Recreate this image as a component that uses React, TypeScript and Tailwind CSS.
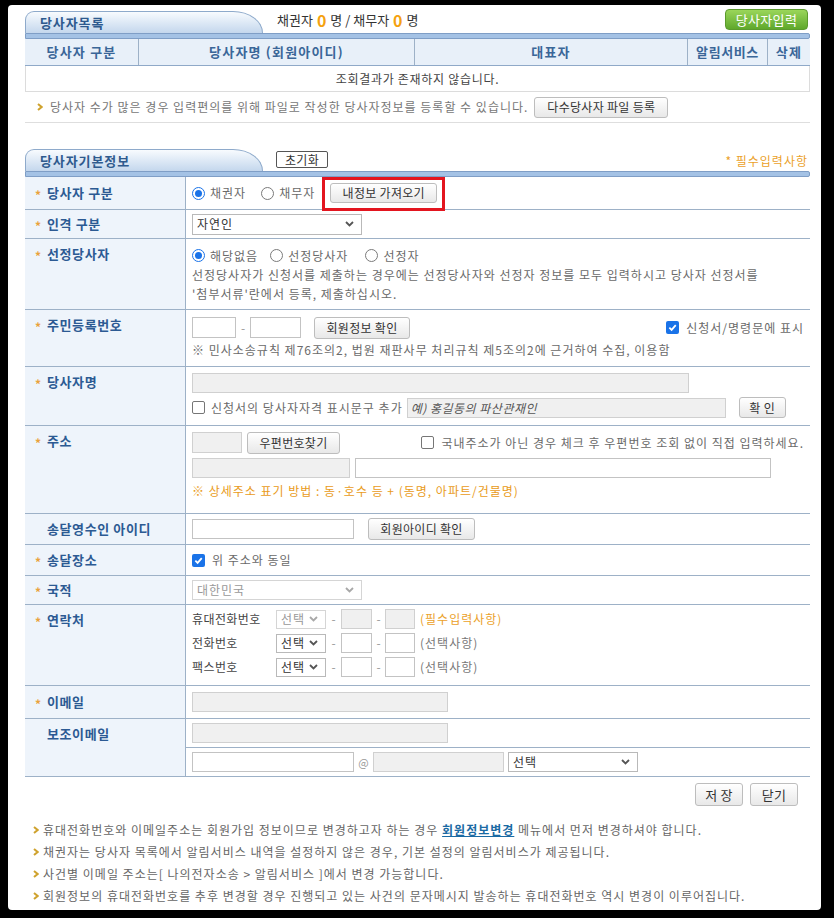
import React from "react";

const FONT = "font-['Noto_Sans_CJK_KR','Noto_Sans',sans-serif]";

function Btn({ children, className = "" }: { children: React.ReactNode; className?: string }) {
  return (
    <span
      className={
        "inline-flex items-center justify-center shrink-0 border border-[#bdbdbd] rounded-[3px] bg-linear-to-b from-white to-[#e8e8e8] text-[12px] leading-none tracking-[0.3px] text-[#333] " +
        className
      }
    >
      {children}
    </span>
  );
}

function Box({ className = "", disabled = false, children }: { className?: string; disabled?: boolean; children?: React.ReactNode }) {
  return (
    <span
      className={
        "flex items-center shrink-0 border " +
        (disabled ? "border-[#d0d0d0] bg-[#f0f0f0] " : "border-[#c3c3c3] bg-white ") +
        className
      }
    >
      {children}
    </span>
  );
}

function Chevron({ disabled = false }: { disabled?: boolean }) {
  return (
    <svg width="9" height="6" viewBox="0 0 9 6" className="shrink-0">
      <path d="M1 1 L4.5 4.5 L8 1" stroke={disabled ? "#a8a8a8" : "#555"} strokeWidth="1.8" fill="none" />
    </svg>
  );
}

function Sel({ className = "", text, disabled = false }: { className?: string; text: string; disabled?: boolean }) {
  return (
    <span
      className={
        "flex items-center justify-between shrink-0 border bg-white pl-[4px] pr-[7px] text-[12px] leading-none " +
        (disabled ? "border-[#d5d5d5] text-[#999] " : "border-[#b9b9b9] text-[#333] ") +
        className
      }
    >
      <span>{text}</span>
      <Chevron disabled={disabled} />
    </span>
  );
}

function Radio({ checked = false }: { checked?: boolean }) {
  return checked ? (
    <span className="w-[13px] h-[13px] rounded-full border-[1.5px] border-[#1a73e8] bg-white flex items-center justify-center shrink-0">
      <span className="block w-[7px] h-[7px] rounded-full bg-[#1a73e8]" />
    </span>
  ) : (
    <span className="block w-[13px] h-[13px] rounded-full border border-[#7a7a7a] bg-white shrink-0" />
  );
}

function Check({ checked = false }: { checked?: boolean }) {
  return checked ? (
    <span className="w-[13px] h-[13px] rounded-[2px] bg-[#1a73e8] flex items-center justify-center shrink-0">
      <svg width="9" height="9" viewBox="0 0 10 10">
        <path d="M1.5 5.2 L4 7.6 L8.6 2.4" stroke="white" strokeWidth="2" fill="none" />
      </svg>
    </span>
  ) : (
    <span className="block w-[13px] h-[13px] rounded-[2px] border border-[#767676] bg-white shrink-0" />
  );
}

function Bullet() {
  return (
    <svg width="6" height="8" viewBox="0 0 6 8" className="shrink-0">
      <path d="M1 1 L4.6 4 L1 7" stroke="#cfa22e" strokeWidth="2" fill="none" />
    </svg>
  );
}

function Tab({ children }: { children: React.ReactNode }) {
  return (
    <div className="w-[238px] h-[22px] shrink-0 rounded-tl-[9px] rounded-tr-[30px_22px] border border-b-0 border-[#8eaacb] bg-linear-to-b from-[#f8fbfe] to-[#c4d7ed] flex items-center pl-[14px] text-[13px] leading-none font-bold tracking-[0.9px] text-[#2e5a8e]">
      {children}
    </div>
  );
}

function Bar() {
  return <div className="h-[6px] bg-[#a4c2e5] border border-[#7f9ec6] rounded-r-[2px]" />;
}

function Row({
  label,
  star = true,
  tall = false,
  h,
  children,
  valueClass = "",
}: {
  label: string;
  star?: boolean;
  tall?: boolean;
  h: string;
  children: React.ReactNode;
  valueClass?: string;
}) {
  return (
    <div className={"flex border-b border-[#9db1c7] " + h}>
      <div
        className={
          "w-[161px] shrink-0 bg-[#eef4fb] border-r border-[#9db1c7] pl-[10px] flex text-[13px] leading-[16px] font-bold tracking-[0.6px] text-[#2c5a93] " +
          (tall ? "items-start pt-[7px]" : "items-center")
        }
      >
        <span className="w-[12px] text-[12px] text-[#e9a23b] translate-y-[2px]">{star ? "*" : ""}</span>
        <span>{label}</span>
      </div>
      <div className={"flex-1 min-w-0 text-[12px] text-[#6a6a6a] " + valueClass}>{children}</div>
    </div>
  );
}

function Dash({ w }: { w: string }) {
  return <span className={"text-center text-[#999] text-[12px] tracking-normal shrink-0 " + w}>-</span>;
}

function PhoneLine({ label, disabled, note, required }: { label: string; disabled?: boolean; note: string; required?: boolean }) {
  return (
    <div className="h-[24px] flex items-center">
      <span className="w-[84px] shrink-0 text-[#444] text-[12px] tracking-[0.4px]">{label}</span>
      <Sel className="w-[50px] h-[19px]" text="선택" disabled={disabled} />
      <Dash w="w-[15px]" />
      <Box className="w-[31px] h-[20px]" disabled={disabled} />
      <Dash w="w-[13px]" />
      <Box className="w-[30px] h-[20px]" disabled={disabled} />
      <span className={"ml-[5px] " + (required ? "text-[#eba12a]" : "text-[#777]")}>{note}</span>
    </div>
  );
}

export default function App() {
  return (
    <div className={"w-[834px] h-[918px] bg-black pt-[5px] pl-[8px] " + FONT}>
      <div className="w-[813px] h-[905px] bg-white rounded-[4px] pl-[17px] pt-[4px] tracking-[1px]">
        <div className="w-[785px]">
          {/* Section 1 */}
          <div className="h-[24px] flex items-start">
            <div className="mt-[2px]">
              <Tab>당사자목록</Tab>
            </div>
            <div className="ml-[14px] mt-[3px] flex items-center text-[13px] leading-[16px] tracking-normal text-[#333]">
              채권자 <span className="mx-[4px] text-[16px] font-bold text-[#f5a20f]">0</span> 명 / 채무자{" "}
              <span className="mx-[4px] text-[16px] font-bold text-[#f5a20f]">0</span> 명
            </div>
            <span className="ml-auto mr-[2px] w-[83px] h-[21px] rounded-[4px] border border-[#5b9a2d] bg-linear-to-b from-[#9ad65a] to-[#5fa82b] flex items-center justify-center text-[13px] leading-none tracking-[0.3px] text-white">
              당사자입력
            </span>
          </div>
          <Bar />
          <div className="h-[27px] flex bg-[#e8f0f9] border-b border-[#8fa9c8] text-[13px] font-bold tracking-[1.2px] text-[#3a6698]">
            <div className="w-[114px] flex items-center justify-center border-r border-[#9db1c7]">당사자 구분</div>
            <div className="w-[276px] flex items-center justify-center border-r border-[#9db1c7]">당사자명 (회원아이디)</div>
            <div className="w-[273px] flex items-center justify-center border-r border-[#9db1c7]">대표자</div>
            <div className="w-[80px] flex items-center justify-center border-r border-[#9db1c7] tracking-[0.6px]">알림서비스</div>
            <div className="w-[42px] flex items-center justify-center">삭제</div>
          </div>
          <div className="h-[26px] flex items-center justify-center border-x border-b border-[#dcdcdc] text-[12px] tracking-[0.7px] text-[#444]">
            조회결과가 존재하지 않습니다.
          </div>
          <div className="h-[31px] flex items-center pl-[12px] border-b border-[#dedede] text-[12px] text-[#777]">
            <Bullet />
            <span className="ml-[7px]">당사자 수가 많은 경우 입력편의를 위해 파일로 작성한 당사자정보를 등록할 수 있습니다.</span>
            <Btn className="ml-[6px] w-[134px] h-[21px] text-[#222]">다수당사자 파일 등록</Btn>
          </div>

          {/* Section 2 */}
          <div className="mt-[26px] h-[22px] flex items-start">
            <Tab>당사자기본정보</Tab>
            <span className="ml-[13px] mt-[2px] w-[52px] h-[17px] border border-[#555] rounded-[2px] bg-white flex items-center justify-center text-[12px] leading-none tracking-[0.3px] text-[#333]">
              초기화
            </span>
            <span className="ml-auto mr-[2px] mt-[4px] text-[12px] leading-[16px] text-[#eba12a]">* 필수입력사항</span>
          </div>
          <Bar />

          <Row label="당사자 구분" h="h-[33px]" valueClass="flex items-center pl-[6px]">
            <Radio checked />
            <span className="ml-[5px]">채권자</span>
            <span className="ml-[15px]">
              <Radio />
            </span>
            <span className="ml-[5px]">채무자</span>
            <span className="relative ml-[15px] flex">
              <Btn className="w-[107px] h-[20px]">내정보 가져오기</Btn>
              <span className="absolute left-[-8px] right-[-8px] top-[-6px] bottom-[-8px] border-[3px] border-[#e3151f]" />
            </span>
          </Row>

          <Row label="인격 구분" h="h-[29px]" valueClass="flex items-center pl-[6px]">
            <Sel className="w-[170px] h-[21px]" text="자연인" />
          </Row>

          <Row label="선정당사자" tall h="h-[71px]" valueClass="pl-[6px] pt-[7px] leading-[19px]">
            <div className="h-[19px] flex items-center">
              <Radio checked />
              <span className="ml-[5px]">해당없음</span>
              <span className="ml-[12px]">
                <Radio />
              </span>
              <span className="ml-[5px]">선정당사자</span>
              <span className="ml-[17px]">
                <Radio />
              </span>
              <span className="ml-[5px]">선정자</span>
            </div>
            <div>선정당사자가 신청서를 제출하는 경우에는 선정당사자와 선정자 정보를 모두 입력하시고 당사자 선정서를</div>
            <div>'첨부서류'란에서 등록, 제출하십시오.</div>
          </Row>

          <Row label="주민등록번호" tall h="h-[57px]" valueClass="pl-[6px] pr-[6px] pt-[7px]">
            <div className="h-[21px] flex items-center">
              <Box className="w-[44px] h-[21px]" />
              <Dash w="w-[14px]" />
              <Box className="w-[51px] h-[21px]" />
              <Btn className="ml-[13px] w-[96px] h-[22px]">회원정보 확인</Btn>
              <span className="ml-auto flex items-center">
                <Check checked />
                <span className="ml-[7px]">신청서/명령문에 표시</span>
              </span>
            </div>
            <div className="mt-[2px] leading-[20px]">※ 민사소송규칙 제76조의2, 법원 재판사무 처리규칙 제5조의2에 근거하여 수집, 이용함</div>
          </Row>

          <Row label="당사자명" tall h="h-[59px]" valueClass="pl-[6px] pt-[6px]">
            <Box disabled className="w-[497px] h-[20px]" />
            <div className="mt-[4px] h-[21px] flex items-center">
              <Check />
              <span className="ml-[6px]">신청서의 당사자자격 표시문구 추가</span>
              <Box disabled className="ml-[4px] w-[319px] h-[20px] pl-[3px] italic tracking-[0.5px] text-[#555]">
                예) 홍길동의 파산관재인
              </Box>
              <Btn className="ml-[13px] w-[47px] h-[21px]">확 인</Btn>
            </div>
          </Row>

          <Row label="주소" tall h="h-[88px]" valueClass="pl-[6px] pr-[6px] pt-[6px]">
            <div className="h-[21px] flex items-center">
              <Box disabled className="w-[50px] h-[21px]" />
              <Btn className="ml-[5px] w-[93px] h-[22px]">우편번호찾기</Btn>
              <span className="ml-auto flex items-center">
                <Check />
                <span className="ml-[7px]">국내주소가 아닌 경우 체크 후 우편번호 조회 없이 직접 입력하세요.</span>
              </span>
            </div>
            <div className="mt-[5px] h-[20px] flex">
              <Box disabled className="w-[158px] h-[20px]" />
              <Box className="ml-[5px] w-[416px] h-[20px]" />
            </div>
            <div className="mt-[3px] leading-[20px] text-[#e99b21]">※ 상세주소 표기 방법 : 동·호수 등 + (동명, 아파트/건물명)</div>
          </Row>

          <Row label="송달영수인 아이디" star={false} h="h-[31px]" valueClass="flex items-center pl-[6px]">
            <Box className="w-[162px] h-[20px]" />
            <Btn className="ml-[14px] w-[107px] h-[22px]">회원아이디 확인</Btn>
          </Row>

          <Row label="송달장소" h="h-[31px]" valueClass="flex items-center pl-[6px]">
            <Check checked />
            <span className="ml-[7px]">위 주소와 동일</span>
          </Row>

          <Row label="국적" h="h-[29px]" valueClass="flex items-center pl-[6px]">
            <Sel disabled className="w-[170px] h-[20px]" text="대한민국" />
          </Row>

          <Row label="연락처" tall h="h-[81px]" valueClass="pl-[6px] pt-[2px]">
            <PhoneLine label="휴대전화번호" disabled note="(필수입력사항)" required />
            <PhoneLine label="전화번호" note="(선택사항)" />
            <PhoneLine label="팩스번호" note="(선택사항)" />
          </Row>

          <Row label="이메일" h="h-[33px]" valueClass="flex items-center pl-[6px]">
            <Box disabled className="w-[256px] h-[20px]" />
          </Row>

          <Row label="보조이메일" star={false} tall h="h-[58px]" valueClass="flex flex-col">
            <div className="h-[29px] shrink-0 flex items-center pl-[6px] border-b border-[#9db1c7]">
              <Box disabled className="w-[256px] h-[20px]" />
            </div>
            <div className="flex-1 flex items-center pl-[6px]">
              <Box className="w-[162px] h-[20px]" />
              <span className="w-[19px] text-center text-[11px] tracking-normal text-[#999]">@</span>
              <Box disabled className="w-[131px] h-[20px]" />
              <Sel className="ml-[4px] w-[130px] h-[20px]" text="선택" />
            </div>
          </Row>

          <div className="mt-[6px] flex justify-end pr-[12px] gap-[7px]">
            <Btn className="w-[48px] h-[23px] text-[13px]">저 장</Btn>
            <Btn className="w-[48px] h-[23px] text-[13px]">닫기</Btn>
          </div>

          <div className="mt-[13px] text-[12px] text-[#666]">
            <div className="h-[22px] flex items-center pl-[8px]">
              <Bullet />
              <span className="ml-[4px]">
                휴대전화번호와 이메일주소는 회원가입 정보이므로 변경하고자 하는 경우{" "}
                <span className="font-bold text-[#1a6aa3] underline">회원정보변경</span> 메뉴에서 먼저 변경하셔야 합니다.
              </span>
            </div>
            <div className="h-[22px] flex items-center pl-[8px]">
              <Bullet />
              <span className="ml-[4px]">채권자는 당사자 목록에서 알림서비스 내역을 설정하지 않은 경우, 기본 설정의 알림서비스가 제공됩니다.</span>
            </div>
            <div className="h-[22px] flex items-center pl-[8px]">
              <Bullet />
              <span className="ml-[4px]">사건별 이메일 주소는[ 나의전자소송 &gt; 알림서비스 ]에서 변경 가능합니다.</span>
            </div>
            <div className="h-[22px] flex items-center pl-[8px]">
              <Bullet />
              <span className="ml-[4px]">회원정보의 휴대전화번호를 추후 변경할 경우 진행되고 있는 사건의 문자메시지 발송하는 휴대전화번호 역시 변경이 이루어집니다.</span>
            </div>
          </div>
        </div>
      </div>
    </div>
  );
}
